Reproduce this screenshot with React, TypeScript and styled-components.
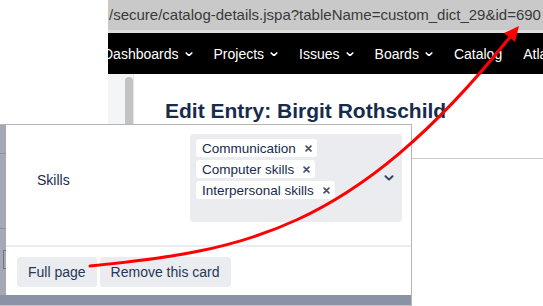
import styled, { createGlobalStyle } from "styled-components";

const GlobalStyle = createGlobalStyle`
  html, body {
    margin: 0;
    padding: 0;
    background: #fff;
  }
  body {
    font-family: "Liberation Sans", Arial, sans-serif;
    overflow: hidden;
  }
`;

const navItems = [
  { label: "Dashboards", menu: true },
  { label: "Projects", menu: true },
  { label: "Issues", menu: true },
  { label: "Boards", menu: true },
  { label: "Catalog", menu: false },
  { label: "Atlas", menu: false },
];

const skills = ["Communication", "Computer skills", "Interpersonal skills"];

const Chevron = ({ color, size }: { color: string; size: number }) => (
  <svg width={size} height={size * 0.6} viewBox="0 0 10 6" fill="none">
    <path d="M1.5 1.2 L5 4.6 L8.5 1.2" stroke={color} strokeWidth="2" strokeLinecap="round" strokeLinejoin="round" />
  </svg>
);

const Cross = () => (
  <svg width="7" height="7" viewBox="0 0 8 8" fill="none">
    <path d="M1.2 1.2 L6.8 6.8 M6.8 1.2 L1.2 6.8" stroke="#42526e" strokeWidth="1.9" strokeLinecap="round" />
  </svg>
);

const App = () => {
  return (
    <>
      <GlobalStyle />
      <Stage>
        <Browser>
          <UrlBar>/secure/catalog-details.jspa?tableName=custom_dict_29&amp;id=690</UrlBar>
          <NavBar>
            <NavTrack>
              {navItems.map((item) => (
                <NavItem key={item.label}>
                  {item.label}
                  {item.menu && (
                    <NavCaret>
                      <Chevron color="#fff" size={8} />
                    </NavCaret>
                  )}
                </NavItem>
              ))}
            </NavTrack>
          </NavBar>
          <PageBody>
            <SideStrip />
            <ScrollGutter>
              <ScrollThumb />
            </ScrollGutter>
            <Content>
              <PageHeader>
                <Title>Edit Entry: Birgit Rothschild</Title>
              </PageHeader>
            </Content>
          </PageBody>
        </Browser>

        <CardShot>
          <CardRow>
            <Backdrop />
            <Card>
              <CardBody>
                <FieldLabel>Skills</FieldLabel>
                <MultiSelect>
                  <TagList>
                    {skills.map((s) => (
                      <Tag key={s}>
                        {s}
                        <TagRemove>
                          <Cross />
                        </TagRemove>
                      </Tag>
                    ))}
                  </TagList>
                  <SelectCaret>
                    <Chevron color="#344563" size={10} />
                  </SelectCaret>
                </MultiSelect>
              </CardBody>
              <CardFooter>
                <GrayButton>Full page</GrayButton>
                <GrayButton>Remove this card</GrayButton>
              </CardFooter>
            </Card>
          </CardRow>
        </CardShot>

        <ArrowLayer width="543" height="306" viewBox="0 0 543 306">
          <path d="M90 266 C240 251 352 234 510 37" stroke="#ff0000" strokeWidth="3" fill="none" strokeLinecap="round" />
          <polygon points="519,26 515,42 504,33" fill="#ff0000" />
        </ArrowLayer>
      </Stage>
    </>
  );
};

const Stage = styled.div`
  position: relative;
  width: 543px;
  height: 306px;
  overflow: hidden;
  display: flex;
  background: #fff;
`;

const Browser = styled.div`
  margin-left: 108px;
  flex: 1;
  min-width: 0;
  display: flex;
  flex-direction: column;
`;

const UrlBar = styled.div`
  height: 30px;
  line-height: 30px;
  padding-left: 1px;
  background: #c9c9c9;
  border-bottom: 3px solid #dedede;
  color: #3a3a3a;
  font-size: 15px;
  white-space: nowrap;
  overflow: hidden;
`;

const NavBar = styled.nav`
  height: 41px;
  background: #000;
  overflow: hidden;
  display: flex;
  align-items: center;
`;

const NavTrack = styled.div`
  display: flex;
  align-items: center;
  gap: 21px;
  margin-left: -5px;
`;

const NavItem = styled.span`
  display: flex;
  align-items: center;
  color: #fff;
  font-size: 14px;
  white-space: nowrap;
`;

const NavCaret = styled.span`
  display: flex;
  margin-left: 6px;
  margin-top: 1px;
`;

const PageBody = styled.div`
  flex: 1;
  display: flex;
`;

const SideStrip = styled.div`
  width: 17px;
  background: #f4f5f7;
`;

const ScrollGutter = styled.div`
  width: 8px;
  padding-top: 3px;
  background: #f4f5f7;
  border-right: 1px solid #e6e6e6;
`;

const ScrollThumb = styled.div`
  height: 100%;
  background: #c3c3c3;
  border-radius: 4px 4px 0 0;
`;

const Content = styled.div`
  flex: 1;
  background: #fff;
`;

const PageHeader = styled.div`
  padding: 25px 0 35px 31px;
  border-bottom: 1px solid #c8c8c8;
`;

const Title = styled.h1`
  margin: 0;
  font-size: 21px;
  line-height: 24px;
  font-weight: 700;
  color: #172b4d;
  white-space: nowrap;
`;

const CardShot = styled.div`
  position: absolute;
  left: 0;
  top: 124px;
  width: 411px;
  padding-bottom: 10px;
  background: #8a93a5;
  border-top: 1px solid #b5b5b5;
  border-right: 1px solid #b5b5b5;
  border-bottom: 1px solid #c4c4c4;
`;

const CardRow = styled.div`
  display: flex;
  height: 170px;
`;

const Backdrop = styled.div`
  width: 6px;
  background:
    linear-gradient(#8b91a0, #8b91a0) 0 28px / 100% 1px no-repeat,
    linear-gradient(#8b91a0, #8b91a0) 0 103px / 100% 1px no-repeat,
    linear-gradient(#6f7585, #6f7585) 3px 125px / 1px 19px no-repeat,
    linear-gradient(#6f7585, #6f7585) 3px 125px / 3px 1px no-repeat,
    linear-gradient(#6f7585, #6f7585) 3px 143px / 3px 1px no-repeat,
    #a5a9b5;
`;

const Card = styled.div`
  flex: 1;
  display: flex;
  flex-direction: column;
  background: #fff;
`;

const CardBody = styled.div`
  display: grid;
  grid-template-columns: 153px 212px;
  align-items: center;
  padding: 9px 9px 23px 31px;
  border-bottom: 2px solid #ebecf0;
`;

const FieldLabel = styled.span`
  font-size: 14px;
  color: #172b4d;
  margin-top: 4px;
`;

const MultiSelect = styled.div`
  height: 88px;
  box-sizing: border-box;
  padding: 5px 6px;
  background: #ebecf0;
  border-radius: 4px;
  display: flex;
  align-items: flex-start;
  justify-content: space-between;
`;

const TagList = styled.div`
  display: flex;
  flex-direction: column;
  align-items: flex-start;
  gap: 3px;
`;

const Tag = styled.span`
  display: flex;
  align-items: center;
  height: 18px;
  padding: 0 5px 0 6px;
  background: #fff;
  border-radius: 3px;
  font-size: 13.5px;
  color: #172b4d;
  white-space: nowrap;
`;

const TagRemove = styled.span`
  display: flex;
  margin-left: 9px;
`;

const SelectCaret = styled.span`
  display: flex;
  align-self: center;
  margin-right: 2px;
`;

const CardFooter = styled.div`
  display: flex;
  gap: 3px;
  padding: 10px 11px 8px;
`;

const GrayButton = styled.button`
  height: 30px;
  padding: 0 11px;
  border: none;
  border-radius: 3px;
  background: #ebecf0;
  color: #253858;
  font-family: "Liberation Sans", Arial, sans-serif;
  font-size: 14px;
  cursor: pointer;
`;

const ArrowLayer = styled.svg`
  position: absolute;
  left: 0;
  top: 0;
  pointer-events: none;
`;

export default App;
